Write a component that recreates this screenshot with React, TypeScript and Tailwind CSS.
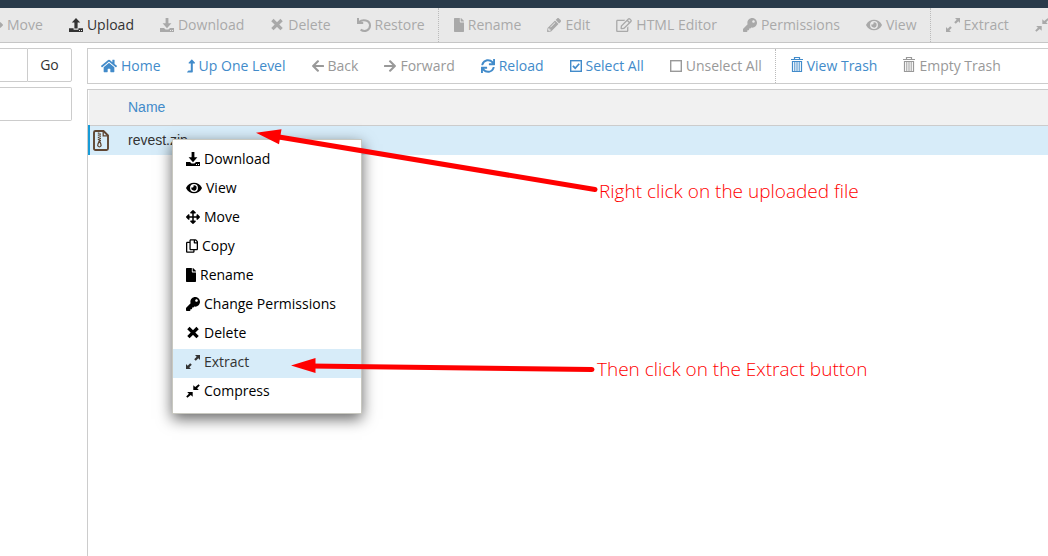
import type { ReactNode } from 'react';
import {
  FaArrowLeft,
  FaArrowRight,
  FaArrowsAlt,
  FaEye,
  FaFile,
  FaHome,
  FaKey,
  FaLevelUpAlt,
  FaPencilAlt,
  FaRegCopy,
  FaRegEdit,
  FaSync,
} from 'react-icons/fa';

const TRAY = 'M0 10h4l1.6 1.6h2.8L10 10h4v4H0zM10 12v1h1v-1zM12 12v1h1v-1z';

const UploadIcon = () => (
  <svg viewBox="0 0 14 14" className="h-3.5 w-3.5 shrink-0" fill="currentColor" fillRule="evenodd">
    <path d="M0 10.2h4.6v1.6h4.8v-1.6H14V14H0zM10 12v.9h1V12zM12 12v.9h1V12z" />
    <path d="M7 0l4.2 4.6H8.6v5.8H5.4V4.6H2.8z" />
  </svg>
);

const DownloadIcon = () => (
  <svg viewBox="0 0 14 14" className="h-3.5 w-3.5 shrink-0" fill="currentColor" fillRule="evenodd">
    <path d={TRAY} />
    <path d="M5.6 0h2.8v5.2h3L7 10.2 2.6 5.2h3z" />
  </svg>
);

const CrossIcon = () => (
  <svg viewBox="0 0 14 14" className="h-3.5 w-3.5 shrink-0" stroke="currentColor" strokeWidth="3.3">
    <path d="M2.4 2l9.2 9.2M11.6 2l-9.2 9.2" />
  </svg>
);

const RestoreIcon = () => (
  <svg viewBox="0 0 14 14" className="h-3.5 w-3.5 shrink-0" fill="none" stroke="currentColor" strokeWidth="2">
    <path d="M2 4C5.500 1 13 1.800 13 7.600c0 5-5.600 6.700-9.400 4" />
    <path d="M1 0v5h5.200" />
  </svg>
);

const ExpandIcon = () => (
  <svg viewBox="0 0 14 14" className="h-3.5 w-3.5 shrink-0" fill="currentColor">
    <path d="M9 0h5v5l-1.700-1.700-2.500 2.500-1.600-1.600 2.500-2.500z" />
    <path d="M5 14H0V9l1.700 1.700 2.500-2.500 1.600 1.600-2.500 2.500z" />
  </svg>
);

const CompressIcon = () => (
  <svg viewBox="0 0 14 14" className="h-3.5 w-3.5 shrink-0" fill="currentColor">
    <path d="M12.600 .2l1.200 1.200-2.700 2.800 1.700 1.900H7.300V1.200l1.900 1.700z" />
    <path d="M1.400 13.800L.2 12.600l2.700-2.800-1.700-1.900h5.500v4.900l-1.900-1.700z" />
  </svg>
);

const BoxIcon = ({ checked = false }: { checked?: boolean }) => (
  <svg viewBox="0 0 12 14" className="h-3.5 w-3 shrink-0" fill="none" stroke="currentColor">
    <rect x=".7" y="1.700" width="10.600" height="10.600" strokeWidth="1.400" />
    {checked && <path d="M2.900 6.900l2.300 2.300 4-4.500" strokeWidth="1.700" />}
  </svg>
);

const TrashIcon = () => (
  <svg viewBox="0 0 12 16" className="h-4 w-3 shrink-0 -translate-y-px" fill="none" stroke="currentColor">
    <path d="M0 2.500h12M3.500 2.500v-2h5v2M1.500 4.500h9M1.500 4v10.500h9V4" strokeWidth="1.200" />
    <path d="M3.800 5v9M6 5v9M8.200 5v9" />
  </svg>
);

const ZipIcon = () => (
  <svg viewBox="0 0 16 21" className="block h-[21px] w-4" fill="none" stroke="#5f4532" strokeWidth="1.900">
    <path d="M2.500 1h8L15 5.500V18.500A1.500 1.500 0 0 1 13.500 20h-11A1.500 1.500 0 0 1 1 18.500v-16A1.500 1.500 0 0 1 2.500 1z" />
    <path d="M10.200 1v4.800H15" strokeWidth="1.300" />
    <path d="M5.600 2.500v8M7.200 3.500v8" strokeWidth="1.600" strokeDasharray="1.200 .9" />
    <path d="M6.400 10.500L4.900 14.300a1.700 1.700 0 1 0 3 0z" strokeWidth="1.300" />
  </svg>
);

const EyeIcon = () => <FaEye className="h-3.5 w-4 shrink-0" />;
const MoveIcon = () => <FaArrowsAlt className="h-3.5 w-3.5 shrink-0" />;
const FileIcon = () => <FaFile preserveAspectRatio="none" className="h-3.5 w-2.5 shrink-0" />;
const KeyIcon = () => <FaKey className="h-3.5 w-3.5 shrink-0" />;

type Action = { label: string; icon: ReactNode; active?: boolean };

const fileActions: Action[][] = [
  [
    { label: 'Move', icon: <MoveIcon /> },
    { label: 'Upload', icon: <UploadIcon />, active: true },
    { label: 'Download', icon: <DownloadIcon /> },
    { label: 'Delete', icon: <CrossIcon /> },
    { label: 'Restore', icon: <RestoreIcon /> },
  ],
  [
    { label: 'Rename', icon: <FileIcon /> },
    { label: 'Edit', icon: <FaPencilAlt className="h-3.5 w-3.5 shrink-0" /> },
    { label: 'HTML Editor', icon: <FaRegEdit className="h-3.5 w-4 shrink-0" /> },
    { label: 'Permissions', icon: <KeyIcon /> },
    { label: 'View', icon: <EyeIcon /> },
  ],
  [
    { label: 'Extract', icon: <ExpandIcon /> },
    { label: 'Compress', icon: <CompressIcon /> },
  ],
];

const navActions: Action[][] = [
  [
    { label: 'Home', icon: <FaHome className="h-4 w-4 shrink-0" />, active: true },
    { label: 'Up One Level', icon: <FaLevelUpAlt className="h-3.5 w-2 shrink-0" />, active: true },
    { label: 'Back', icon: <FaArrowLeft className="h-3.5 w-3 shrink-0" /> },
    { label: 'Forward', icon: <FaArrowRight className="h-3.5 w-3 shrink-0" /> },
    { label: 'Reload', icon: <FaSync className="h-3.5 w-3.5 shrink-0" />, active: true },
    { label: 'Select All', icon: <BoxIcon checked />, active: true },
    { label: 'Unselect All', icon: <BoxIcon /> },
  ],
  [
    { label: 'View Trash', icon: <TrashIcon />, active: true },
    { label: 'Empty Trash', icon: <TrashIcon /> },
  ],
];

const menuActions: Action[] = [
  { label: 'Download', icon: <DownloadIcon /> },
  { label: 'View', icon: <EyeIcon /> },
  { label: 'Move', icon: <MoveIcon /> },
  { label: 'Copy', icon: <FaRegCopy className="h-3.5 w-3 shrink-0" /> },
  { label: 'Rename', icon: <FileIcon /> },
  { label: 'Change Permissions', icon: <KeyIcon /> },
  { label: 'Delete', icon: <CrossIcon /> },
  { label: 'Extract', icon: <ExpandIcon />, active: true },
  { label: 'Compress', icon: <CompressIcon /> },
];

function ActionGroups({ groups, on, off }: { groups: Action[][]; on: string; off: string }) {
  return groups.map((group, index) => (
    <div key={index} className={index > 0 ? 'flex border-l border-dotted border-[#bbb] pl-0.5' : 'flex'}>
      {group.map((action) => (
        <button
          key={action.label}
          type="button"
          className={`flex items-center gap-1 px-[13px] whitespace-nowrap ${action.active ? on : off}`}
        >
          {action.icon}
          {action.label}
        </button>
      ))}
    </div>
  ));
}

function ContextMenu() {
  return (
    <ul
      role="menu"
      className="absolute top-[139px] left-[172px] w-[190px] border border-[#c8c8c0] bg-white py-1.5 shadow-[0_5px_14px_rgba(0,0,0,0.6)]"
    >
      {menuActions.map((action) => (
        <li key={action.label} role="none">
          <button
            type="button"
            role="menuitem"
            className={`flex h-[29px] w-full items-center gap-1 px-[13px] pb-1 ${
              action.active ? 'bg-[#d7ecf9] text-[#333]' : 'text-black'
            }`}
          >
            {action.icon}
            {action.label}
          </button>
        </li>
      ))}
    </ul>
  );
}

function Annotations() {
  return (
    <>
      <svg
        viewBox="0 0 360 260"
        className="pointer-events-none absolute top-[120px] left-[250px] h-[260px] w-[360px]"
        fill="#f00"
        stroke="#f00"
      >
        <path d="M345 69.500L26 16.500M342 249.500L60 246" strokeWidth="5" strokeLinecap="round" />
        <path d="M6 12.700l25.500-3.500-2.500 15zM41 245.500l24.500-7.500v15z" stroke="none" />
      </svg>
      <p className="absolute top-[179px] left-[599px] text-[19px] leading-6 font-light whitespace-nowrap text-[#f00]">
        Right click on the uploaded file
      </p>
      <p className="absolute top-[357px] left-[597px] text-[19px] leading-6 font-light whitespace-nowrap text-[#f00]">
        Then click on the Extract button
      </p>
    </>
  );
}

export default function App() {
  return (
    <div className="relative flex min-h-screen flex-col overflow-hidden bg-white font-['Open_Sans',sans-serif] text-sm text-[#333]">
      <header className="h-2 bg-[#293a4a]" />
      <div className="h-[35px] overflow-hidden border-b border-[#c6c6c6] bg-[#e9e9e9]">
        <div className="-ml-6 flex h-full">
          <ActionGroups groups={fileActions} on="text-[#333]" off="text-[#a9a9a9]" />
        </div>
      </div>
      <div className="flex grow gap-[15px] pt-[5px]">
        <aside className="w-[72px] shrink-0">
          <form className="flex h-[34px]">
            <input aria-label="Path" className="w-[27px] border-y border-[#ccc] bg-white" />
            <button type="button" className="grow rounded-r-xs border border-[#ccc]">
              Go
            </button>
          </form>
          <div className="mt-[5px] h-[34px] rounded-r-xs border border-l-0 border-[#ccc]" />
        </aside>
        <main className="flex min-w-0 grow flex-col">
          <nav className="flex h-9 overflow-hidden border border-r-0 border-[#ccc]">
            <ActionGroups groups={navActions} on="text-[#428bca]" off="text-[#999]" />
          </nav>
          <section className="mt-[5px] grow border-t border-l border-[#ccc] font-['Liberation_Sans',sans-serif]">
            <table className="w-full table-fixed border-collapse">
              <thead>
                <tr className="h-[35px] border-b border-[#ccc] bg-[#f1f1f1]">
                  <th className="w-[39px]" aria-label="Type" />
                  <th className="text-left font-normal text-[#428bca]">Name</th>
                </tr>
              </thead>
              <tbody>
                <tr className="h-[30px] bg-[#d7ecf9]">
                  <td className="border-l-2 border-[#179bd7] pl-[3px]">
                    <ZipIcon />
                  </td>
                  <td>revest.zip</td>
                </tr>
              </tbody>
            </table>
          </section>
        </main>
      </div>
      <ContextMenu />
      <Annotations />
    </div>
  );
}
